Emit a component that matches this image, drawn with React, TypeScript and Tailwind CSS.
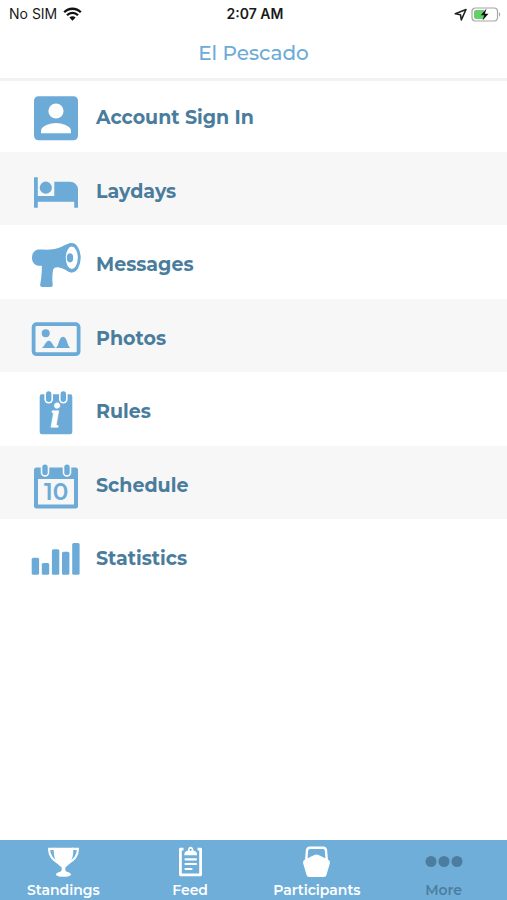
import type { ReactNode } from "react";
import clsx from "clsx";

type MenuItem = { label: string; icon: ReactNode };

type Tab = { label: string; icon: ReactNode; active?: boolean };

function MenuIcon({ children }: { children: ReactNode }) {
  return (
    <svg
      aria-hidden
      viewBox="0 0 50 50"
      className="h-[50px] w-[50px] shrink-0"
      fill="currentColor"
    >
      {children}
    </svg>
  );
}

function TabIcon({ children }: { children: ReactNode }) {
  return (
    <svg aria-hidden viewBox="0 0 32 32" className="h-8 w-8" fill="currentColor">
      {children}
    </svg>
  );
}

/** Binder ring over the top edge of a pad, outlined in the row's colour. */
function Ring({ x, y, bg }: { x: number; y: number; bg: string }) {
  return (
    <g>
      <rect x={x - 4.3} y={y - 1} width="8.6" height="13.2" rx="4.3" fill={bg} />
      <rect x={x - 2.7} y={y} width="5.4" height="10.6" rx="2.7" />
    </g>
  );
}

const items: MenuItem[] = [
  {
    label: "Account Sign In",
    icon: (
      <MenuIcon>
        <rect x="3" y="3.3" width="44" height="44" rx="4.5" />
        <circle cx="25" cy="18" r="7.6" fill="#fff" />
        <path d="M10 40.3v-2.5c0-5 9.5-7.8 15-7.8s15 2.8 15 7.8v2.5z" fill="#fff" />
      </MenuIcon>
    ),
  },
  {
    label: "Laydays",
    icon: (
      <MenuIcon>
        <path d="M3 10.3h3.8v18.7h16.5V14.7h15.7a8 8 0 0 1 8 8v18h-3.8v-6H6.8v6H3z" />
        <circle cx="14.8" cy="20.7" r="6.1" />
      </MenuIcon>
    ),
  },
  {
    label: "Messages",
    icon: (
      <MenuIcon>
        <path d="M8.5 9.5C17 9.8 25 10 31 6.5c3.5-2 6-3.3 9.5-3.3v29.2c-4-.6-8-4.4-13.500-5.1-3-.3-4.5.8-5 3.200-.8 4.5-.9 9.5-.3 13.5.3 2-.5 3-2.200 3h-8.200c-1.800 0-2.400-1.200-2-3 1-5.500 1.700-12 1.500-18.200H8.500C4 25.800 1 22.500 1 17.700s3-8.200 7.500-8.200z" />
        <ellipse cx="40.7" cy="17.8" rx="9" ry="14.7" />
        <ellipse cx="40.8" cy="17.8" rx="6" ry="11.2" fill="#fff" />
        <ellipse cx="39" cy="17.8" rx="3.2" ry="4.6" />
      </MenuIcon>
    ),
  },
  {
    label: "Photos",
    icon: (
      <MenuIcon>
        <rect
          x="2.6"
          y="10.2"
          width="45"
          height="30"
          rx="3"
          fill="none"
          stroke="currentColor"
          strokeWidth="3.800"
        />
        <circle cx="14.7" cy="19.3" r="4" />
        <path d="M10.800 34c3-1.500 3.700-7.300 7-7.300s4 5.800 7 7.300z" />
        <path d="M24.900 34c3.300-2.500 2.800-11.300 7.100-11.300s4 8.800 7.300 11.300z" />
      </MenuIcon>
    ),
  },
  {
    label: "Rules",
    icon: (
      <MenuIcon>
        <rect x="8.7" y="7.3" width="32.6" height="40" rx="2.2" />
        <Ring x={17.7} y={4.3} bg="#fff" />
        <Ring x={32.3} y={4.3} bg="#fff" />
        <text
          x="24"
          y="40"
          textAnchor="middle"
          fill="#fff"
          stroke="#fff"
          strokeWidth="0.8"
          className="font-['Liberation_Serif',serif] text-[34px] font-bold italic"
        >
          i
        </text>
      </MenuIcon>
    ),
  },
  {
    label: "Schedule",
    icon: (
      <MenuIcon>
        <rect x="3" y="6.5" width="44" height="41" rx="2.5" />
        <rect x="7" y="18" width="36" height="25.5" fill="#f7f7f7" />
        <Ring x={14} y={3.5} bg="#f7f7f7" />
        <Ring x={36} y={3.5} bg="#f7f7f7" />
        <text
          x="25"
          y="38.6"
          textAnchor="middle"
          className="font-['Montserrat',Inter,sans-serif] text-[23px] font-semibold"
        >
          10
        </text>
      </MenuIcon>
    ),
  },
  {
    label: "Statistics",
    icon: (
      <MenuIcon>
        <rect x="0.7" y="23.7" width="7.4" height="17" rx="1.5" />
        <rect x="10.8" y="29" width="7.4" height="11.7" rx="1.5" />
        <rect x="20.9" y="15.3" width="7.4" height="25.4" rx="1.5" />
        <rect x="31" y="17.7" width="7.4" height="23" rx="1.5" />
        <rect x="41.2" y="9" width="7.4" height="31.7" rx="1.5" />
      </MenuIcon>
    ),
  },
];

const tabs: Tab[] = [
  {
    label: "Standings",
    icon: (
      <TabIcon>
        <path d="M6.7 1.800h19.600v2.700c0 8-3 13.700-7.500 16.500-.8.5-.8 3.400.3 4.400 2.600.5 4.900 1.600 4.900 3.100 0 1.400-3.500 2.300-7.500 2.300s-7.500-.9-7.500-2.300c0-1.500 2.300-2.600 4.900-3.100 1.100-1 1.100-3.900.3-4.400C9.700 18.200 6.700 12.500 6.700 4.500z" />
        <path
          d="M8 2.900H2.100C2 9 5.500 13.800 12 17.500M25 2.900h5.900C31 9 27.500 13.800 21 17.500"
          fill="none"
          stroke="currentColor"
          strokeWidth="2.100"
        />
      </TabIcon>
    ),
  },
  {
    label: "Feed",
    icon: (
      <TabIcon>
        <path
          d="M9.500 3.200H6.400v25.600h20.200V3.200h-3.100"
          fill="none"
          stroke="currentColor"
          strokeWidth="2.800"
          strokeLinejoin="round"
        />
        <path d="M10.300 9.200c0-2.900 1-4.200 3.500-4.500.2-2.300 1-4 2.900-4s2.700 1.700 2.900 4c2.500.3 3.500 1.600 3.500 4.500z" />
        <circle cx="16.7" cy="3.8" r="1.100" fill="#70aeda" />
        <path
          d="M11.500 13.300h10.500M11.500 18h10.500M11.500 23h6"
          stroke="currentColor"
          strokeWidth="2.200"
          strokeLinecap="round"
        />
      </TabIcon>
    ),
  },
  {
    label: "Participants",
    icon: (
      <TabIcon>
        <path
          d="M5.200 14.500 6 4.500C6.200 2.600 7 1.700 8.800 1.700h13.400c1.800 0 2.600.9 2.800 2.800l.8 10"
          fill="none"
          stroke="currentColor"
          strokeWidth="2.400"
        />
        <path d="M15.500 8.600c1.200 0 9.200 3.700 11.700 5.200 1.500.9 2 2 1.600 3.700l-3.300 11.300c-.4 1.500-1.300 2.200-2.800 2.200H8.300c-1.500 0-2.400-.7-2.800-2.200L2.200 17.500c-.4-1.700.1-2.800 1.600-3.700 2.500-1.500 10.500-5.200 11.700-5.200z" />
      </TabIcon>
    ),
  },
  {
    label: "More",
    active: true,
    icon: (
      <svg aria-hidden viewBox="0 0 40 32" className="h-8 w-10" fill="currentColor">
        <circle cx="7" cy="15.5" r="5.500" />
        <circle cx="20" cy="15.5" r="5.500" />
        <circle cx="33" cy="15.5" r="5.500" />
      </svg>
    ),
  },
];

function StatusBar() {
  return (
    <div className="grid h-7 grid-cols-3 items-center pr-1.5 pl-[9px] font-[Inter,sans-serif] text-sm text-[#1a1a1a]">
      <div className="flex items-center gap-1.5">
        <span>No SIM</span>
        <svg aria-label="Wi-Fi" viewBox="0 0 19 14" className="h-3.5 w-[19px]">
          <path
            d="M1.200 5.200a11.700 11.700 0 0 1 16.600 0M4 8.200a7.700 7.700 0 0 1 11 0"
            fill="none"
            stroke="#111"
            strokeWidth="2.300"
          />
          <path d="M6.400 10.500a4.400 4.400 0 0 1 6.200 0L9.500 13.700z" fill="#111" />
        </svg>
      </div>
      <span className="text-center font-semibold">2:07 AM</span>
      <div className="flex items-center justify-end gap-1">
        <svg aria-label="Location" viewBox="0 0 13 13" className="h-[13px] w-[13px]">
          <path
            d="M1.300 5.800 12 1.500 7.300 11.800 6.500 6.800z"
            fill="none"
            stroke="#222"
            strokeWidth="1.600"
            strokeLinejoin="round"
          />
        </svg>
        <svg aria-label="Battery charging" viewBox="0 0 30 15" className="h-[15px] w-[30px]">
          <rect x="1" y="1" width="25.5" height="13" rx="3.500" fill="#fff" stroke="#a6a6a6" strokeWidth="1.200" />
          <path d="M5 3h8v9H5a2 2 0 0 1-2-2V5a2 2 0 0 1 2-2z" fill="#65cf6b" />
          <path d="M28 5.300c1.600.5 1.600 3.900 0 4.400z" fill="#a6a6a6" />
          <path d="M15.500 1.500 9.800 8.300h3.400L11.500 13.500l6-6.800h-3.600z" fill="#111" />
        </svg>
      </div>
    </div>
  );
}

export default function App() {
  return (
    <div className="flex min-h-screen flex-col bg-white font-['Montserrat',Inter,sans-serif]">
      <header className="relative h-[78px] shadow-[0_3px_0_#f2f2f2]">
        <StatusBar />
        <h1 className="text-center text-xl leading-[50px] font-medium text-[#6cabd8]">
          El Pescado
        </h1>
      </header>

      <main className="flex-1">
        <ul>
          {items.map((item) => (
            <li key={item.label} className="h-[74px] even:h-[73px] even:bg-[#f7f7f7]">
              <a
                href="#"
                className="flex h-full items-center gap-[15px] pt-1.5 pl-[31px] text-[#6cabd8]"
              >
                {item.icon}
                <span className="text-[19px] leading-7 font-bold text-[#4a7c9d]">
                  {item.label}
                </span>
              </a>
            </li>
          ))}
        </ul>
      </main>

      <nav className="grid h-[60px] grid-cols-4 bg-[#70aeda]">
        {tabs.map((tab) => (
          <button
            key={tab.label}
            type="button"
            aria-current={tab.active ? "page" : undefined}
            className={clsx(
              "flex flex-col items-center pt-1.5 text-sm leading-6 font-semibold",
              tab.active ? "text-[#4d7d9e]" : "text-white",
            )}
          >
            {tab.icon}
            <span>{tab.label}</span>
          </button>
        ))}
      </nav>
    </div>
  );
}
